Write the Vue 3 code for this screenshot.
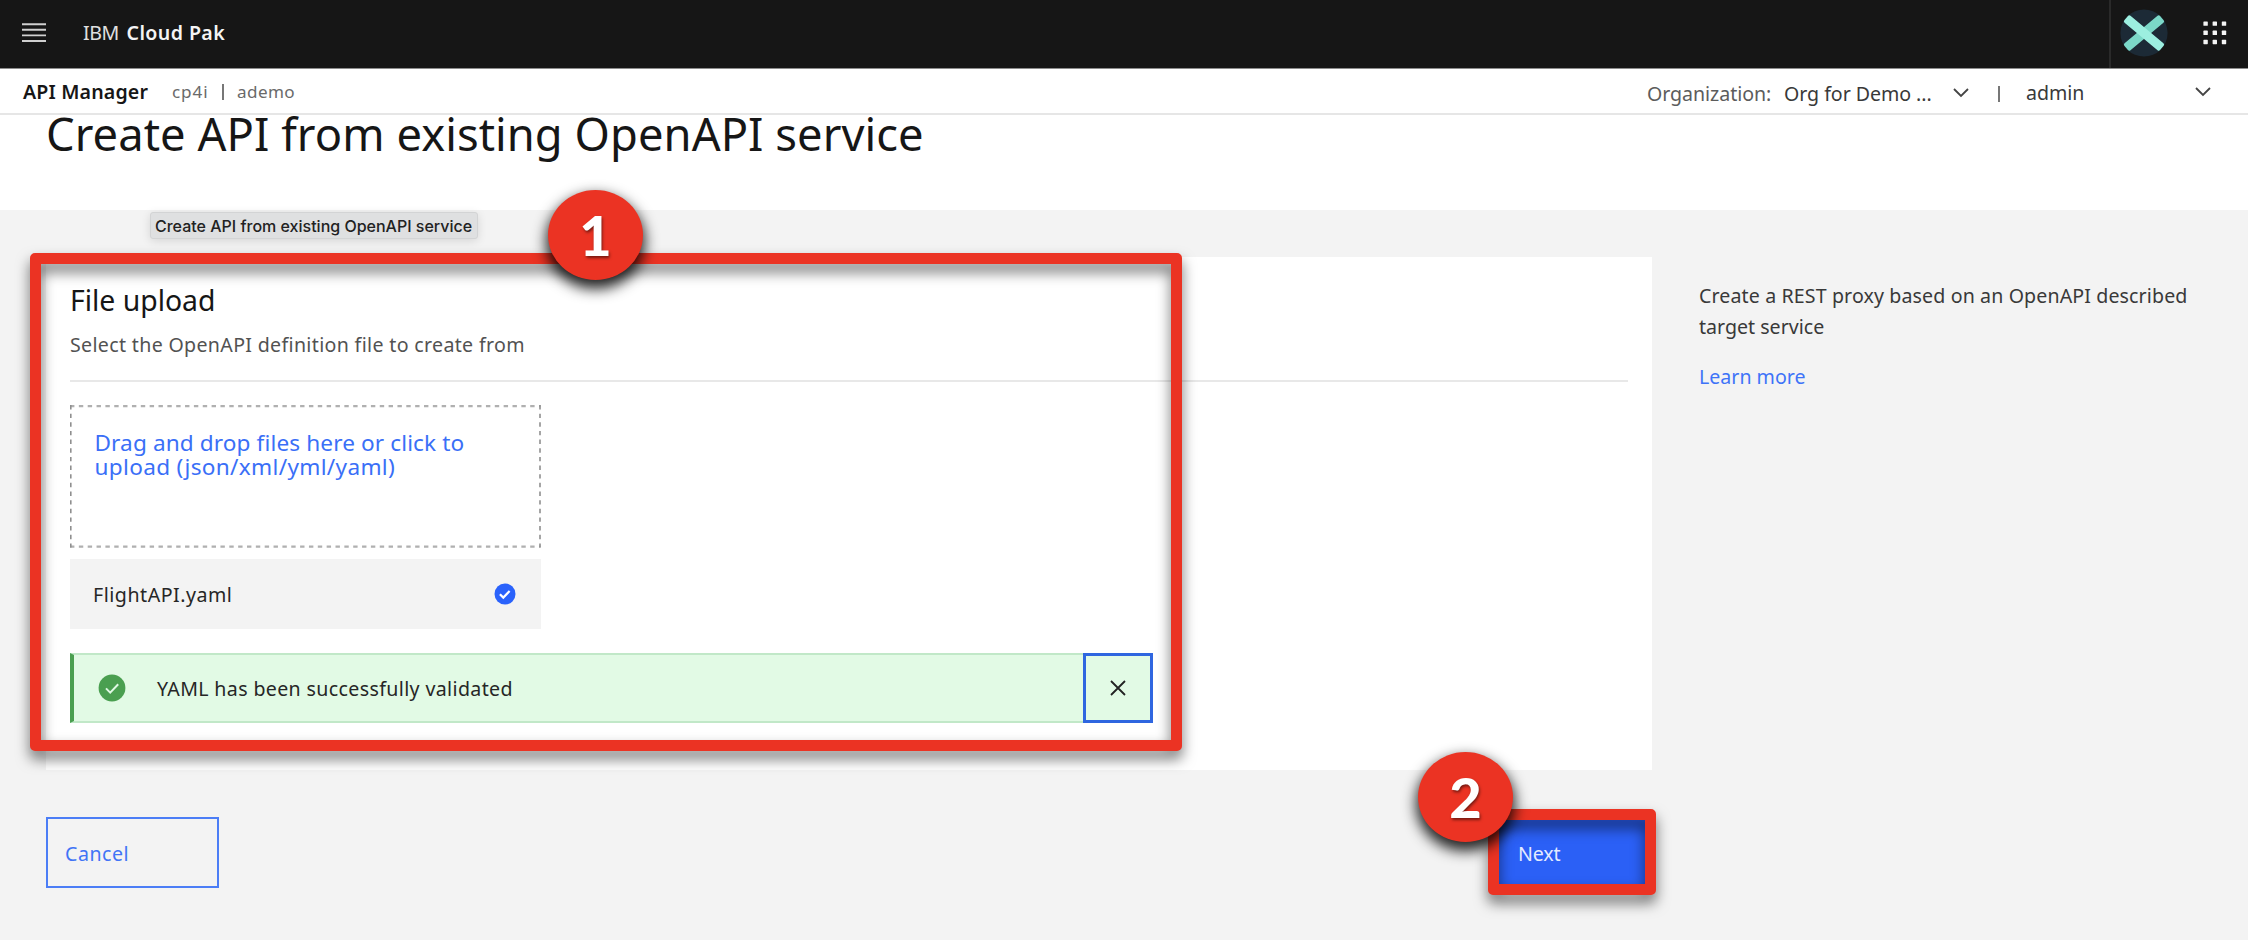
<script setup>
const dots = [0, 1, 2].flatMap((row) => [0, 1, 2].map((col) => ({ x: col * 9.2, y: row * 9.2 })))
</script>

<template>
  <div class="page">
    <header class="topbar">
      <svg class="menu" width="24" height="20" viewBox="0 0 24 20">
        <path d="M0 1.2h24M0 6.8h24M0 12.4h24M0 18h24" stroke="#d0d0d0" stroke-width="1.9" />
      </svg>
      <div class="brand"><span class="ibm">IBM</span><strong>Cloud Pak</strong></div>
      <div class="tools">
        <svg class="logo" width="48" height="48" viewBox="-24 -24 48 48">
          <circle r="23.6" fill="#1c2a36" />
          <rect x="-23.3" y="-4.6" width="46.6" height="9.2" rx="1.8" fill="#7bd8c8" transform="rotate(-40)" />
          <rect x="-23.3" y="-4.6" width="46.6" height="9.2" rx="1.8" fill="#9cefe0" transform="rotate(40)" />
        </svg>
        <svg class="apps" width="24" height="24" viewBox="0 0 24 24">
          <rect v-for="(d, i) in dots" :key="i" :x="d.x + 0.4" :y="d.y + 0.4" width="4.4" height="4.4" rx="0.6" fill="#f4f4f4" />
        </svg>
      </div>
    </header>

    <nav class="subbar">
      <div class="crumbs">
        <span class="product">API Manager</span>
        <span class="cp4i">cp4i</span>
        <span class="pipe"></span>
        <span class="ademo">ademo</span>
      </div>
      <div class="account">
        <span class="org-label">Organization:</span>
        <span class="org">Org for Demo ...</span>
        <svg class="chev" width="16" height="10" viewBox="0 0 16 10"><path d="M1 1l7 7 7-7" fill="none" stroke="#444" stroke-width="1.8" /></svg>
        <span class="pipe"></span>
        <span class="user">admin</span>
        <svg class="chev last" width="16" height="10" viewBox="0 0 16 10"><path d="M1 1l7 7 7-7" fill="none" stroke="#444" stroke-width="1.8" /></svg>
      </div>
    </nav>

    <div class="titleband"><h1>Create API from existing OpenAPI service</h1></div>

    <main class="body">
      <div class="left">
        <section class="card">
          <h2>File upload</h2>
          <p class="hint">Select the OpenAPI definition file to create from</p>
          <hr />
          <div class="drop">
            <svg class="dash" width="472" height="143" viewBox="0 0 472 143">
              <path d="M0 1.2H470.5M0 141.6H470.5" stroke="#b0b0b0" stroke-width="2.2" stroke-dasharray="4.4 4.45" />
              <path d="M0.8 0V142.6M470 0V142.6" stroke="#8f8f8f" stroke-width="1.6" stroke-dasharray="4.4 4.25" />
            </svg>
            <span class="l1">Drag and drop files here or click to</span>
            <span class="l2">upload (json/xml/yml/yaml)</span>
          </div>
          <div class="file">
            <span>FlightAPI.yaml</span>
            <svg width="22" height="22" viewBox="0 0 22 22">
              <circle cx="11" cy="11" r="10.5" fill="#2a62fb" />
              <path d="M5.9 11.2l3.4 3.4 6.3-6.5" fill="none" stroke="#fff" stroke-width="2.2" />
            </svg>
          </div>
          <div class="notice">
            <svg class="ok" width="28" height="28" viewBox="0 0 28 28">
              <circle cx="14" cy="14" r="13.4" fill="#4a9f50" />
              <path d="M8 14.4l4.2 4.2 8-8.4" fill="none" stroke="#e0f8e4" stroke-width="2" />
            </svg>
            <span>YAML has been successfully validated</span>
            <button class="close" aria-label="close">
              <svg width="16" height="16" viewBox="0 0 16 16"><path d="M1 1l14 14M15 1L1 15" stroke="#222" stroke-width="1.8" /></svg>
            </button>
          </div>
        </section>
        <div class="actions">
          <button class="cancel">Cancel</button>
          <button class="next">Next</button>
        </div>
      </div>
      <aside class="help">
        <p class="desc"><span>Create a REST proxy based on an OpenAPI described</span><br />target service</p>
        <a class="learn">Learn more</a>
      </aside>
    </main>

    <div class="tooltip">Create API from existing OpenAPI service</div>
    <div class="frame frame-one"></div>
    <div class="frame frame-two"></div>
    <div class="marker marker-one">1</div>
    <div class="marker marker-two">2</div>
  </div>
</template>

<style>
body { background: #f3f3f3; overflow: hidden; }
</style>

<style scoped>
.page {
  position: relative;
  width: 2248px;
  height: 940px;
  overflow: hidden;
  background: #f3f3f3;
  color: #161616;
  font-family: "Noto Sans", "Open Sans", sans-serif;
  font-size: 19.6px;
}
.page * { box-sizing: border-box; }
h1, h2, p { margin: 0; font-weight: 400; }
button { font: inherit; padding: 0; margin: 0; background: none; border: 0; }
svg { display: block; flex: none; }

.topbar { display: flex; align-items: center; height: 68px; padding-left: 22px; background: #161616; color: #f4f4f4; }
.menu { margin-top: -3px; }
.brand { display: flex; margin: -2px 0 0 37px; line-height: 30px; }
.ibm { width: 43.5px; letter-spacing: -0.4px; color: #e0e0e0; }
.brand strong { font-weight: 600; letter-spacing: 0.4px; }
.tools { display: flex; align-items: center; height: 68px; width: 139px; margin-left: auto; border-left: 2px solid #2a2a2a; padding-left: 9px; }
.logo { margin-top: -3px; }
.apps { margin: -3px 0 0 35px; }

.subbar { display: flex; justify-content: space-between; height: 47px; padding: 2px 0 0 23px; background: #fff; border-top: 1px solid #8d8d8d; border-bottom: 2px solid #e6e6e6; line-height: 30px; }
.crumbs, .account { display: flex; align-items: center; }
.product { width: 149px; font-weight: 600; letter-spacing: 0.15px; }
.cp4i, .ademo { font-size: 17.1px; color: #6a6a6a; }
.cp4i { width: 50px; letter-spacing: 0.9px; }
.ademo { letter-spacing: 0.4px; margin-left: 13px; }
.pipe { width: 2px; height: 16px; background: #777; }
.account { width: 601px; padding-top: 3px; color: #393939; letter-spacing: -0.05px; }
.org-label { width: 137px; color: #5c5c5c; }
.org { width: 169px; }
.account .pipe { margin: 1px 26px 0 29px; }
.chev { margin-top: -2px; }
.user { width: 169px; margin-top: -2px; }
.chev.last { margin-top: -4px; }

.titleband { height: 95px; padding-left: 46px; background: #fff; }
h1 { font-size: 45.3px; line-height: 40px; letter-spacing: 0.06px; transform: translateY(-1px); white-space: nowrap; }

.body { display: flex; padding: 47px 0 0 46px; }
.left { width: 1606px; }
.card { height: 513px; padding: 24.5px 24px 0; background: #fff; }
h2 { font-size: 28.4px; line-height: 36px; letter-spacing: -0.02px; }
.hint { margin-top: 13px; line-height: 28px; letter-spacing: 0.33px; color: #525252; }
hr { height: 2px; margin: 21.5px 0 22.5px; border: 0; background: #e8e8e8; }
.drop { position: relative; width: 471px; height: 143px; padding: 26.5px 0 0 24.5px; font-size: 22.6px; line-height: 24px; color: #3a6ff7; white-space: nowrap; }
.drop span { display: block; }
.dash { position: absolute; left: 0; top: 0; }
.l1 { letter-spacing: 0.12px; }
.l2 { letter-spacing: 0.32px; }
.file { display: flex; align-items: center; justify-content: space-between; width: 471px; height: 70px; margin-top: 11.5px; padding: 0 25px 0 23px; background: #f3f3f3; letter-spacing: 0.52px; color: #262626; }
.notice { display: flex; align-items: center; width: 1083px; height: 70px; margin-top: 24px; background: #e2fae5; border: 2px solid #c1e8c8; border-left: 4px solid #4a9f50; border-right: 0; padding-left: 24px; letter-spacing: 0.36px; color: #262626; }
.notice span { margin-left: 31px; }
.close { display: flex; align-items: center; justify-content: center; width: 70px; height: 70px; margin: -2px 0 -2px auto; border: 3px solid #2f66e0; }

.actions { display: flex; justify-content: space-between; margin-top: 47px; }
.cancel, .next { height: 71px; text-align: left; padding-top: 2px; }
.cancel { width: 173px; padding-left: 17px; border: 2px solid #4b7df6; color: #4174f6; letter-spacing: 0.5px; }
.next { width: 160px; padding-left: 26px; background: #2b60f6; color: #e4ebff; letter-spacing: -0.1px; }

.help { padding: 23px 0 0 47px; line-height: 31px; color: #393939; white-space: nowrap; }
.desc span { letter-spacing: 0.12px; }
.learn { display: block; margin-top: 19px; color: #3e73f8; }

.tooltip { position: absolute; left: 150px; top: 212px; width: 328px; height: 27px; padding-left: 4px; background: #dfe0e1; border: 1px solid #d3d4d5; border-radius: 3px; box-shadow: 0 2px 10px rgba(0, 0, 0, 0.12); font: 500 16px/26px Inter, sans-serif; white-space: nowrap; color: #222; }

.frame { position: absolute; border: 11px solid #eb3323; border-radius: 5px; filter: drop-shadow(0 8px 7px rgba(0, 0, 0, 0.55)); }
.frame-one { left: 30px; top: 253px; width: 1152px; height: 498px; }
.frame-two { left: 1488px; top: 809px; width: 168px; height: 86px; }
.marker { position: absolute; width: 95px; height: 90px; border-radius: 50%; background: #eb3323; box-shadow: 0 7px 14px 2px rgba(0, 0, 0, 0.85); color: #fff; font: 900 56px/89px Lato, sans-serif; text-align: center; text-shadow: 1px 2px 3px rgba(0, 0, 0, 0.5); }
.marker-one { left: 548px; top: 190px; }
.marker-two { left: 1418px; top: 752px; }
</style>
